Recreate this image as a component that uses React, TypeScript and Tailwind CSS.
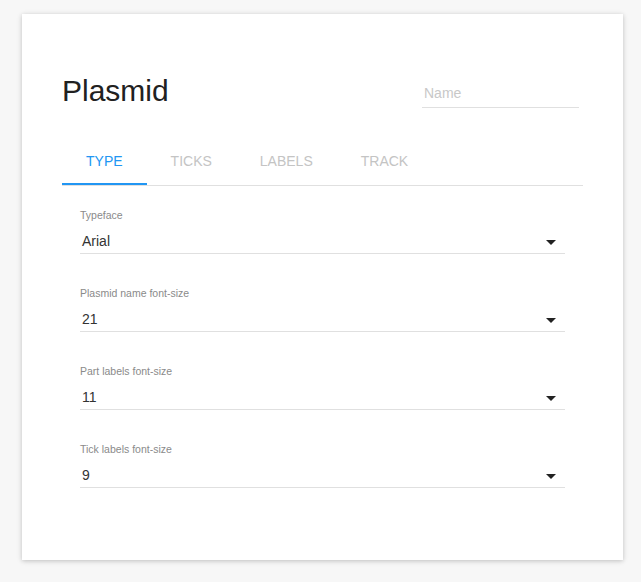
import { useState } from "react";

const fields = [
  { label: "Typeface", value: "Arial" },
  { label: "Plasmid name font-size", value: "21" },
  { label: "Part labels font-size", value: "11" },
  { label: "Tick labels font-size", value: "9" },
];

const tabs = ["TYPE", "TICKS", "LABELS", "TRACK"];

const App = () => {
  const [active, setActive] = useState(0);

  return (
    <div className="min-h-screen bg-[#f7f7f7] pl-[22px] pt-[14px] font-['Liberation_Sans',Arial,sans-serif]">
      <div className="w-[601px] bg-white px-[40px] pt-[59px] pb-[72px] shadow-[0_1px_6px_rgba(0,0,0,0.12),0_1px_4px_rgba(0,0,0,0.12)]">
        {/* Header */}
        <div className="flex justify-between items-start">
          <h1 className="text-[30px] leading-[36px] text-[#212121]">Plasmid</h1>
          <div className="w-[157px] mr-[4px] mt-[7px] h-[28px] border-b border-[#e0e0e0] flex items-center">
            <input
              placeholder="Name"
              className="w-full px-[2px] text-[14px] text-[#333] placeholder:text-[#c8c8c8] outline-none bg-transparent"
            />
          </div>
        </div>

        {/* Tabs */}
        <div className="mt-[28px] flex border-b border-[#e0e0e0]">
          {tabs.map((t, i) => (
            <button
              key={t}
              onClick={() => setActive(i)}
              className={`relative h-[48px] px-6 text-[14px] ${
                active === i ? "text-[#2196f3]" : "text-[#c4c4c4]"
              }`}
            >
              {t}
              {active === i && (
                <span className="absolute left-0 right-0 bottom-0 h-[2px] bg-[#2196f3]" />
              )}
            </button>
          ))}
        </div>

        {/* Fields */}
        <div className="mt-[21px] px-[18px] flex flex-col gap-[31px]">
          {fields.map((f) => (
            <div key={f.label}>
              <div className="text-[10.5px] leading-4 text-[#8a8a8a]">{f.label}</div>
              <div className="mt-[6px] h-[25px] flex items-center justify-between border-b border-[#e0e0e0] pl-[2px] pr-[9px]">
                <span className="text-[14px] text-[#333]">{f.value}</span>
                <svg width="10" height="5" viewBox="0 0 10 5" className="mt-[2px]">
                  <path d="M0 0h10L5 5z" fill="#222" />
                </svg>
              </div>
            </div>
          ))}
        </div>
      </div>
    </div>
  );
};

export default App;
